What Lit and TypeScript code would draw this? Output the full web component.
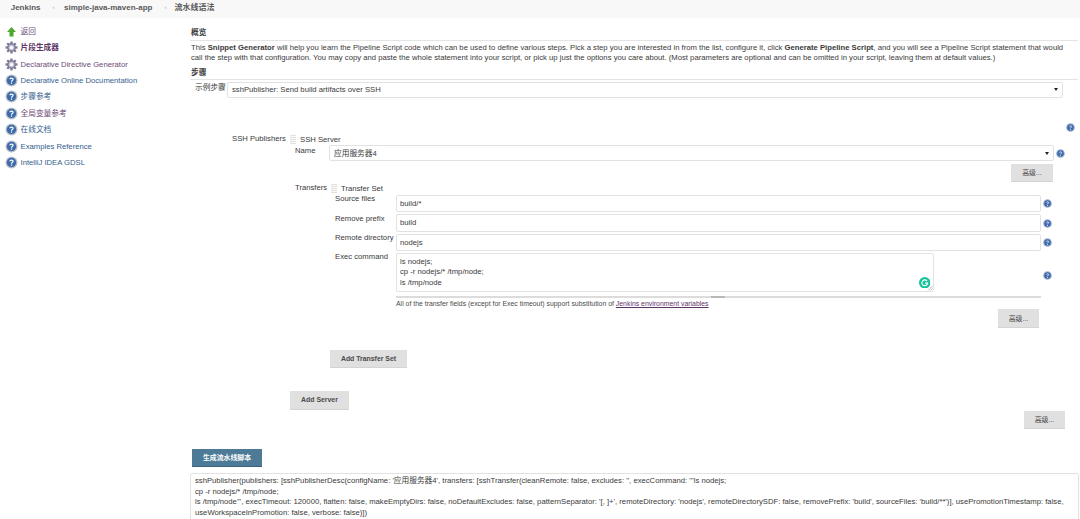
import { LitElement, html, css, svg } from "lit";
import { customElement } from "lit/decorators.js";

const gear = html`<svg class="sicon" viewBox="0 0 16 16"><g fill="#7a7a96"><circle cx="8" cy="8" r="5.4"/>${[0,45,90,135,180,225,270,315].map(a=>svg`<rect x="6.6" y="0.6" width="2.8" height="3.4" transform="rotate(${a} 8 8)"/>`)}</g><circle cx="8" cy="8" r="3.6" fill="#c3c3d4"/><circle cx="8" cy="8" r="2" fill="#fff"/></svg>`;
const bigHelp = html`<svg class="sicon" viewBox="0 0 16 16"><circle cx="8" cy="8" r="7.4" fill="#b9c0cc"/><circle cx="8" cy="8" r="5.8" fill="#3d6aa8"/><path d="M6 6.4C6.2 4.6 10 4.6 10 6.6C10 8 8 8 8 9.4" fill="none" stroke="#fff" stroke-width="1.5"/><rect x="7.2" y="10.4" width="1.6" height="1.6" fill="#fff"/></svg>`;
const arrow = html`<svg class="sicon" viewBox="0 0 16 16"><path d="M8 2.5L13.5 8.5H10.5V14H5.5V8.5H2.5Z" fill="#4ea72e"/></svg>`;
const help = html`<svg class="help" viewBox="0 0 10 10"><circle cx="5" cy="5" r="4.8" fill="#9db2d4"/><circle cx="5" cy="5" r="3.6" fill="#3f69a8"/><path d="M3.8 3.9C4 2.9 6.2 2.9 6.2 4C6.2 4.9 5 4.9 5 5.8" fill="none" stroke="#fff" stroke-width=".9"/><rect x="4.5" y="6.5" width="1" height="1" fill="#fff"/></svg>`;

const links: [any, string, string][] = [
  [arrow, "返回", "v"],
  [gear, "片段生成器", "cur"],
  [gear, "Declarative Directive Generator", "v"],
  [bigHelp, "Declarative Online Documentation", "b"],
  [bigHelp, "步骤参考", "b"],
  [bigHelp, "全局变量参考", "v"],
  [bigHelp, "在线文档", "b"],
  [bigHelp, "Examples Reference", "b"],
  [bigHelp, "IntelliJ IDEA GDSL", "b"],
];

@customElement("app-root")
export class AppRoot extends LitElement {
  static styles = css`
    :host { display: block; width: 1080px; height: 519px; overflow: hidden; background: #fff; color: #3a3a3a;
      font: 7.7px/11px "Liberation Sans", "Noto Sans CJK SC", sans-serif; white-space: nowrap; }
    * { box-sizing: border-box; }
    .crumbs { height: 17.5px; background: #f8f8f8; display: flex; align-items: center; padding: 0 0 3px 10.7px; font-size: 8px; font-weight: bold; color: #5a5a5a; }
    .crumbs i { font-style: normal; color: #aaa; font-size: 6px; font-weight: normal; }
    .sep1 { margin: 0 9.5px 0 12px; }
    .sep2 { margin: 0 8px 0 12px; }
    .body { display: flex; }
    aside { width: 190px; flex: none; padding: 5.5px 0 0 4.5px; }
    .side { display: flex; align-items: center; height: 16.45px; gap: 3px; }
    .sicon { width: 13px; height: 13px; flex: none; }
    .side.v { color: #6b4a75; } .side.b { color: #35608f; } .side.cur { color: #5c3566; font-weight: bold; }
    main { flex: 1; min-width: 0; padding-right: 2px; }
    h4 { margin: 0; font-size: 7.7px; font-weight: bold; line-height: 11px; border-bottom: 1px solid #e4e4e4; padding-left: 1px; }
    h4.first { margin-top: 9.5px; padding-bottom: 2px; }
    h4.second { margin-top: 3px; padding-bottom: 1px; }
    p { margin: 2px 0 0; line-height: 10.3px; padding-left: 1px; }
    p.cont { margin-top: 0; }
    .step { display: flex; margin: 2.4px 0 0 5px; }
    .step .lab { width: 32px; }
    .stepbox { width: 836px; height: 15.6px; }
    .box { border: 1px solid #e2e2e2; border-radius: 2px; background: #fff; display: flex; align-items: center; padding-left: 4px; position: relative; }
    .caret { position: absolute; right: 4px; top: 5.5px; border: 2.2px solid transparent; border-top: 3px solid #222; border-bottom: 0; }
    .topq { display: flex; justify-content: flex-end; padding-right: 3px; margin-top: 25.6px; height: 9px; }
    .help { width: 9px; height: 9px; display: block; flex: none; }
    .pub { display: flex; margin: 1.3px 0 0 42px; height: 11px; }
    .pub .lab { width: 58px; }
    .handle { width: 6px; height: 9px; flex: none; margin-top: 2px; background: repeating-linear-gradient(#e2e2e2 0 1px, #f8f8f8 1px 2px); }
    .hdtext { margin: 1px 0 0 4px; }
    .row { display: flex; margin: 1px 0 0 105px; height: 18.5px; }
    .row .nm { width: 34px; }
    .row .box { height: 16px; width: 725px; flex: none; }
    .row .help { margin: 4px 0 0 1.5px; }
    button { border: 0; background: #e0e0e0; color: #4a4a4a; font: inherit; font-size: 6.9px; padding: 0; display: block; border-bottom: 1px solid #d4d4d4; }
    .adv { width: 42px; height: 18px; }
    .advrow { display: flex; justify-content: flex-end; }
    .advrow.a1 { padding-right: 25px; }
    .advrow.a2 { padding-right: 39px; }
    .tr { display: flex; margin: .5px 0 0 105px; height: 11px; }
    .tr .lab { width: 36px; }
    .fields { margin-top: 1.5px; }
    .field { display: flex; margin-left: 145px; height: 19.3px; }
    .fl { width: 61px; margin-top: -1.5px; }
    .field .box { width: 645px; height: 17.3px; padding-left: 3px; }
    .field .help { margin: 4.5px 0 0 1.5px; }
    .exec { display: flex; margin-left: 145px; height: 39.5px; }
    .exec .ta { width: 538px; height: 39.5px; border: 1px solid #e2e2e2; border-radius: 2px; padding: 3px 0 0 3px; position: relative; line-height: 10.4px; }
    .g { position: absolute; right: 3px; bottom: 3px; width: 11.5px; height: 11.5px; }
    .grip { position: absolute; right: 0; bottom: 0; width: 6px; height: 6px; }
    .exec .help { margin: 18.5px 0 0 108.5px; }
    .bar { margin: 4px 0 0 206px; width: 645px; height: 1.5px; background: #dcdcdc; display: flex; }
    .bar b { display: block; width: 14px; height: 1.5px; margin-left: 315px; background: #b8b8b8; }
    .hint { margin: 1.2px 0 0 206px; font-size: 6.9px; line-height: 10px; color: #4a4a4a; }
    .hint a { color: #5c3566; text-decoration: underline; }
    .adv2 { width: 41px; height: 19px; }
    .addts { width: 77px; height: 18px; margin: 21.5px 0 0 140px; font-weight: bold; }
    .adds { width: 59px; height: 19px; margin: 23px 0 0 100px; font-weight: bold; }
    .adv3 { width: 41px; height: 18px; margin: 1.7px 13px 0 0; }
    .gen { width: 70px; height: 18.5px; margin: 19.7px 0 0 2px; background: #4d7a97; color: #fff; font-weight: bold; border-bottom: 1px solid #3d6277; }
    .out { margin: 5.5px 0 0; width: 889px; height: 60px; border: 1px solid #e2e2e2; border-radius: 2px; padding: 2.5px 0 0 4px; line-height: 10.4px; white-space: pre; }
  `;

  render() {
    return html`
      <div class="crumbs"><span>Jenkins</span><i class="sep1">›</i><span>simple-java-maven-app</span><i class="sep2">›</i><span>流水线语法</span></div>
      <div class="body">
        <aside>${links.map(([ic, t, c]) => html`<div class="side ${c}">${ic}<span>${t}</span></div>`)}</aside>
        <main>
          <h4 class="first">概览</h4>
          <p>This <b>Snippet Generator</b> will help you learn the Pipeline Script code which can be used to define various steps. Pick a step you are interested in from the list, configure it, click <b>Generate Pipeline Script</b>, and you will see a Pipeline Script statement that would</p>
          <p class="cont">call the step with that configuration. You may copy and paste the whole statement into your script, or pick up just the options you care about. (Most parameters are optional and can be omitted in your script, leaving them at default values.)</p>
          <h4 class="second">步骤</h4>
          <div class="step"><span class="lab">示例步骤</span><div class="box stepbox">sshPublisher: Send build artifacts over SSH<span class="caret"></span></div></div>
          <div class="topq">${help}</div>
          <div class="pub"><span class="lab">SSH Publishers</span><span class="handle"></span><span class="hdtext">SSH Server</span></div>
          <div class="row"><span class="nm">Name</span><div class="box">应用服务器4<span class="caret"></span></div>${help}</div>
          <div class="advrow a1"><button class="adv">高级...</button></div>
          <div class="tr"><span class="lab">Transfers</span><span class="handle"></span><span class="hdtext">Transfer Set</span></div>
          <div class="fields">
            <div class="field"><span class="fl">Source files</span><div class="box">build/*</div>${help}</div>
            <div class="field"><span class="fl">Remove prefix</span><div class="box">build</div>${help}</div>
            <div class="field"><span class="fl">Remote directory</span><div class="box">nodejs</div>${help}</div>
            <div class="exec"><span class="fl">Exec command</span>
              <div class="ta">ls nodejs;<br>cp -r nodejs/* /tmp/node;<br>ls /tmp/node
                <svg class="g" viewBox="0 0 12 12"><circle cx="6" cy="6" r="6" fill="#15c39a"/><path d="M8.4 4.2A3 3 0 1 0 9 6.4H6.4" fill="none" stroke="#fff" stroke-width="1.2"/></svg>
                <svg class="grip" viewBox="0 0 6 6"><path d="M5.5 1L1 5.5M5.5 3.5L3.5 5.5" stroke="#999" stroke-width=".7"/></svg>
              </div>${help}</div>
          </div>
          <div class="bar"><b></b></div>
          <div class="hint">All of the transfer fields (except for Exec timeout) support substitution of <a>Jenkins environment variables</a></div>
          <div class="advrow a2"><button class="adv2">高级...</button></div>
          <button class="addts">Add Transfer Set</button>
          <button class="adds">Add Server</button>
          <div class="advrow"><button class="adv3">高级...</button></div>
          <button class="gen">生成流水线脚本</button>
          <div class="out">sshPublisher(publishers: [sshPublisherDesc(configName: '应用服务器4', transfers: [sshTransfer(cleanRemote: false, excludes: '', execCommand: '''ls nodejs;
cp -r nodejs/* /tmp/node;
ls /tmp/node''', execTimeout: 120000, flatten: false, makeEmptyDirs: false, noDefaultExcludes: false, patternSeparator: '[, ]+', remoteDirectory: 'nodejs', remoteDirectorySDF: false, removePrefix: 'build', sourceFiles: 'build/**')], usePromotionTimestamp: false,
useWorkspaceInPromotion: false, verbose: false)])</div>
        </main>
      </div>
    `;
  }
}
